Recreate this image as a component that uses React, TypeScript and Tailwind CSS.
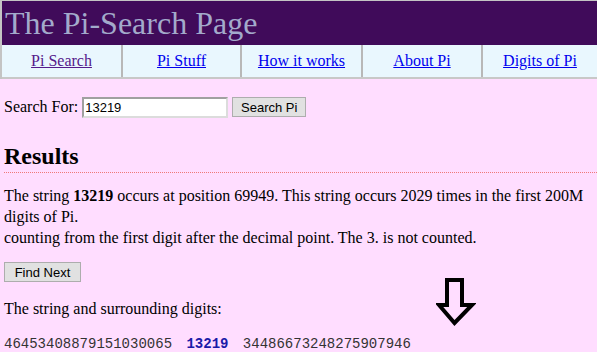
const NAV = [
  { label: 'Pi Search', w: 'w-[121px]', visited: true },
  { label: 'Pi Stuff', w: 'w-[119px]' },
  { label: 'How it works', w: 'w-[121px]' },
  { label: 'About Pi', w: 'w-[120px]' },
  { label: 'Digits of Pi', w: 'flex-1' },
]

export default function App() {
  return (
    <div className="relative h-[352px] w-[597px] overflow-hidden bg-[#ffddff] font-[Liberation_Serif,serif] text-[16px] text-black">
      <div className="border-t border-l-2 border-[#c4c4c4]">
        <div className="h-[44px] overflow-hidden bg-[#400b5a] pl-[3px] pt-[4px] text-[32px] leading-[36px] text-[#a3aacb]">
          The Pi-Search Page
        </div>
        <div className="flex h-[34px] border-b-2 border-[#c8c8c8] bg-[#e9f7fe]">
          {NAV.map((n, i) => (
            <div
              key={n.label}
              className={`${n.w} flex items-center justify-center ${i < NAV.length - 1 ? 'border-r-2 border-[#b8b8b8]' : ''}`}
            >
              <a href="#" className={`underline ${n.visited ? 'text-[#551a8b]' : 'text-[#0000ee]'}`}>
                {n.label}
              </a>
            </div>
          ))}
        </div>
      </div>

      <div className="pl-[4px]">
        <div className="mt-[17px] flex h-[22px] items-center">
          <span>Search For:</span>
          <input
            defaultValue="13219"
            className="ml-[4px] h-[21px] w-[146px] border-2 border-t-[#a0a0a0] border-l-[#a0a0a0] border-r-[#dcdcdc] border-b-[#dcdcdc] bg-white px-[1px] font-[Liberation_Sans,sans-serif] text-[13px] outline-none"
          />
          <button className="ml-[4px] h-[20px] w-[74px] border border-[#adadad] bg-[#e1e1e1] font-[Liberation_Sans,sans-serif] text-[13px] leading-none">
            Search Pi
          </button>
        </div>

        <h2 className="mt-[24px] border-b border-dotted border-[#f07878] pb-[2px] text-[24px] font-bold leading-[28px]">
          Results
        </h2>

        <p className="mt-[12px] leading-[21px]">
          The string <b>13219</b> occurs at position 69949. This string occurs 2029 times in the first 200M digits of Pi.
          <br />
          counting from the first digit after the decimal point. The 3. is not counted.
        </p>

        <button className="mt-[14px] h-[20px] w-[77px] border border-[#adadad] bg-[#e1e1e1] font-[Liberation_Sans,sans-serif] text-[13px] leading-none">
          Find Next
        </button>

        <p className="mt-[14px] leading-[21px]">The string and surrounding digits:</p>

        <div className="mt-[15px] whitespace-pre font-[Liberation_Mono,monospace] text-[14px] leading-[21px] text-[#333]">
          46453408879151030065<span className="mx-[6px] font-bold text-[#1a1aa8]"> 13219 </span>34486673248275907946
        </div>
      </div>

      <svg
        className="absolute left-[436px] top-[276px]"
        width="40"
        height="54"
        viewBox="0 0 40 54"
        fill="none"
      >
        <path
          d="M11 4 H26 V29 H36 L18.5 47 L3 29 H11 Z"
          stroke="black"
          strokeWidth="4"
          strokeLinejoin="miter"
        />
      </svg>
    </div>
  )
}
